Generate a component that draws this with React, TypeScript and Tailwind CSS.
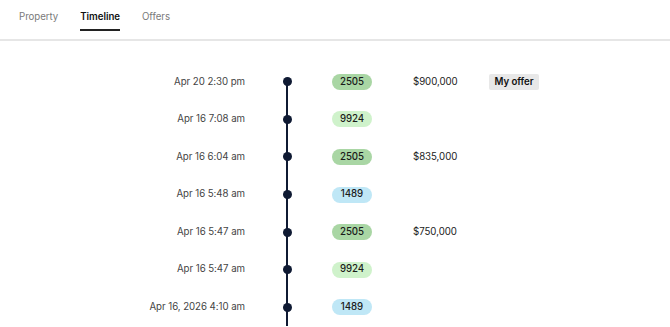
import React from "react";

type Row = { date: string; badge: string; kind: "dg" | "lg" | "bl"; price?: string; mine?: boolean };

const rows: Row[] = [
  { date: "Apr 20 2:30 pm", badge: "2505", kind: "dg", price: "$900,000", mine: true },
  { date: "Apr 16 7:08 am", badge: "9924", kind: "lg" },
  { date: "Apr 16 6:04 am", badge: "2505", kind: "dg", price: "$835,000" },
  { date: "Apr 16 5:48 am", badge: "1489", kind: "bl" },
  { date: "Apr 16 5:47 am", badge: "2505", kind: "dg", price: "$750,000" },
  { date: "Apr 16 5:47 am", badge: "9924", kind: "lg" },
  { date: "Apr 16, 2026 4:10 am", badge: "1489", kind: "bl" },
];

const badgeCls: Record<Row["kind"], string> = {
  dg: "bg-[#a9d6a4]",
  lg: "bg-[#cff2cb]",
  bl: "bg-[#bfe7f6]",
};

export default function App() {
  return (
    <div className="w-[670px] h-[327px] overflow-hidden bg-white text-[9.7px] tracking-[-0.05px]" style={{ fontFamily: "Inter, 'Noto Sans', sans-serif" }}>
      <div className="flex h-[41px] border-b-2 border-[#e6e6e6] pl-[19px] gap-[22px]">
        <div className="pt-[10px] text-[#7a7a7a]">Property</div>
        <div className="flex flex-col pt-[10px]">
          <span className="font-semibold text-[#111]">Timeline</span>
          <div className="mt-[4px] h-[2px] bg-[#222]" />
        </div>
        <div className="pt-[10px] text-[#7a7a7a]">Offers</div>
      </div>
      <div className="pt-[22px] flex flex-col">
        {rows.map((r, i) => (
          <div key={i} className="flex items-center h-[37.6px]">
            <div className="w-[245px] text-right text-[#444]">{r.date}</div>
            <div className="relative w-[84px] h-full flex items-center justify-center">
              <div className={`absolute left-[41px] w-[2px] bg-[#0f1a33] ${i === 0 ? "top-1/2 bottom-0" : "top-0 bottom-0"}`} />
              <div className="relative w-[9px] h-[9px] rounded-full bg-[#0f1a33]" />
            </div>
            <div className={`ml-[3px] w-[40px] h-[16px] rounded-full flex items-center justify-center font-medium text-[#1a1a1a] ${badgeCls[r.kind]}`}>
              {r.badge}
            </div>
            <div className="ml-[41px] w-[76px] text-[#222]">{r.price ?? ""}</div>
            {r.mine && (
              <div className="h-[16px] w-[50px] justify-center rounded-[2px] bg-[#e8e8e8] font-semibold text-[#111] flex items-center">My offer</div>
            )}
          </div>
        ))}
      </div>
    </div>
  );
}
